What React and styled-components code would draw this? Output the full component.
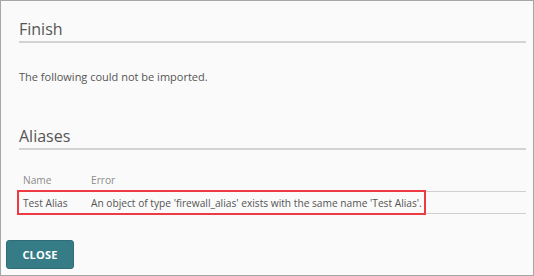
import React from "react";
import styled, { createGlobalStyle } from "styled-components";

const GlobalStyle = createGlobalStyle`
  html, body {
    margin: 0;
    padding: 0;
    background: #ffffff;
  }
  body {
    font-family: "Open Sans", "Liberation Sans", sans-serif;
  }
`;

const Panel = styled.div`
  box-sizing: border-box;
  width: 534px;
  height: 276px;
  border: 1px solid #a6a6a6;
  background: #fafafa;
  display: flex;
  flex-direction: column;
`;

const Body = styled.div`
  padding: 17px 7px 0 18px;
`;

const Heading = styled.h2`
  margin: ${(p) => (p.first ? "0" : "40px")} 0 0;
  padding: 0 0 1px;
  font-size: 16px;
  line-height: 22px;
  font-weight: 400;
  color: #555;
  border-bottom: 2px solid #d3d3d3;
`;

const Text = styled.p`
  margin: 26px 0 0;
  font-size: 11px;
  line-height: 16px;
  color: #555;
`;

const Table = styled.div`
  margin-top: 19px;
  position: relative;
`;

const Row = styled.div`
  display: grid;
  grid-template-columns: 68px 1fr;
  align-items: center;
  height: ${(p) => (p.head ? "22px" : "21px")};
  border-bottom: 1px solid #cfcfcf;
  padding-left: 4px;
  font-size: 10.2px;
  color: ${(p) => (p.head ? "#8a8a8a" : "#555")};
`;

const Highlight = styled.div`
  position: absolute;
  left: -2px;
  top: 21px;
  width: 409px;
  height: 25px;
  box-sizing: border-box;
  border: 2px solid #ee3b43;
  pointer-events: none;
`;

const Footer = styled.div`
  margin-top: auto;
  padding: 0 0 6px 5px;
`;

const Button = styled.button`
  width: 68px;
  height: 29px;
  border: 1px solid #2e6d77;
  border-radius: 3px;
  background: #367c87;
  color: #fff;
  font-family: "Open Sans", "Liberation Sans", sans-serif;
  font-weight: 700;
  font-size: 11px;
  letter-spacing: 0.2px;
  cursor: pointer;
`;

const App = () => {
  return (
    <>
      <GlobalStyle />
      <Panel>
        <Body>
          <Heading first>Finish</Heading>
          <Text>The following could not be imported.</Text>
          <Heading>Aliases</Heading>
          <Table>
            <Row head>
              <span>Name</span>
              <span>Error</span>
            </Row>
            <Row>
              <span>Test Alias</span>
              <span>An object of type 'firewall_alias' exists with the same name 'Test Alias'.</span>
            </Row>
            <Highlight />
          </Table>
        </Body>
        <Footer>
          <Button>CLOSE</Button>
        </Footer>
      </Panel>
    </>
  );
};

export default App;
